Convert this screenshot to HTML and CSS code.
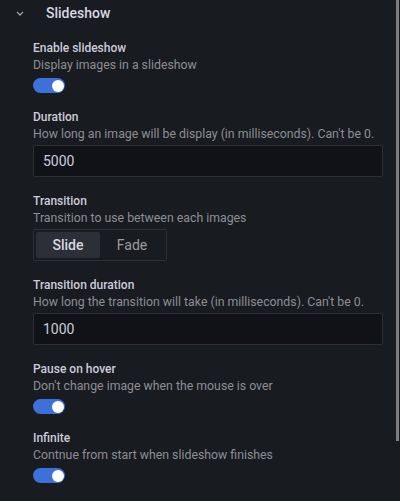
FILE: index.html
```html
<!DOCTYPE html>
<html>
<head>
<meta charset="utf-8">
<link rel="stylesheet" href="styles.css">
</head>
<body>
<div class="panel">
  <div class="header">
    <svg class="chevron" width="8" height="5" viewBox="0 0 8 5"><path d="M1 1 L4 4 L7 1" fill="none" stroke="#9fa0a6" stroke-width="1.3"/></svg>
    <span class="title">Slideshow</span>
  </div>
  <div class="fields">
    <div class="field">
      <div class="label">Enable slideshow</div>
      <div class="desc">Display images in a slideshow</div>
      <div class="switch"><span class="knob"></span></div>
    </div>
    <div class="field">
      <div class="label">Duration</div>
      <div class="desc">How long an image will be display (in milliseconds). Can't be 0.</div>
      <div class="input">5000</div>
    </div>
    <div class="field">
      <div class="label">Transition</div>
      <div class="desc">Transition to use between each images</div>
      <div class="radio">
        <span class="opt active">Slide</span>
        <span class="opt">Fade</span>
      </div>
    </div>
    <div class="field">
      <div class="label">Transition duration</div>
      <div class="desc">How long the transition will take (in milliseconds). Can't be 0.</div>
      <div class="input">1000</div>
    </div>
    <div class="field">
      <div class="label">Pause on hover</div>
      <div class="desc">Don't change image when the mouse is over</div>
      <div class="switch"><span class="knob"></span></div>
    </div>
    <div class="field">
      <div class="label">Infinite</div>
      <div class="desc">Contnue from start when slideshow finishes</div>
      <div class="switch"><span class="knob"></span></div>
    </div>
  </div>
</div>
<div class="scrollbar"></div>
</body>
</html>
```
FILE: styles.css
```css
html, body {
  margin: 0;
  padding: 0;
  background: #181b1f;
  height: 100%;
  overflow: hidden;
}
body {
  font-family: Roboto, "Liberation Sans", sans-serif;
  color: #ccccdc;
  position: relative;
}
.panel {
  padding-right: 17px;
}
.header {
  display: flex;
  align-items: center;
  height: 26px;
  padding-left: 16px;
}
.chevron {
  display: block;
  margin-top: 1px;
}
.title {
  margin-left: 22px;
  font-size: 14px;
  font-weight: 500;
  color: #d8d9e0;
}
.fields {
  padding-top: 15px;
  padding-left: 33px;
}
.field {
  margin-bottom: 17px;
  display: flex;
  flex-direction: column;
  align-items: flex-start;
}
.label {
  font-size: 12px;
  font-weight: 500;
  line-height: 15px;
  color: #ccccdc;
}
.desc {
  font-size: 12.3px;
  line-height: 18px;
  color: #8e8f95;
  margin-bottom: 2px;
}
.switch {
  margin-top: 2px;
  width: 32px;
  height: 15px;
  border-radius: 8px;
  background: #3d71d9;
  position: relative;
}
.knob {
  position: absolute;
  right: 1px;
  top: 1.5px;
  width: 12px;
  height: 12px;
  border-radius: 50%;
  background: #fff;
}
.input {
  box-sizing: border-box;
  align-self: stretch;
  height: 32px;
  background: #111217;
  border: 1px solid #2c2f34;
  border-radius: 2px;
  font-size: 14px;
  line-height: 30px;
  padding-left: 9px;
  color: #ccccdc;
}
.radio {
  box-sizing: border-box;
  height: 32px;
  display: flex;
  padding: 2px;
  border: 1px solid #2c2f34;
  border-radius: 2px;
}
.opt {
  width: 64px;
  display: flex;
  align-items: center;
  justify-content: center;
  font-size: 14px;
  color: #9c9da2;
  border-radius: 2px;
}
.opt.active {
  background: #2c2f35;
  color: #d8d9e0;
  font-weight: 500;
}
.scrollbar {
  position: absolute;
  top: 0;
  right: 1px;
  width: 3px;
  height: 441px;
  background: #7c7c7c;
}
```
